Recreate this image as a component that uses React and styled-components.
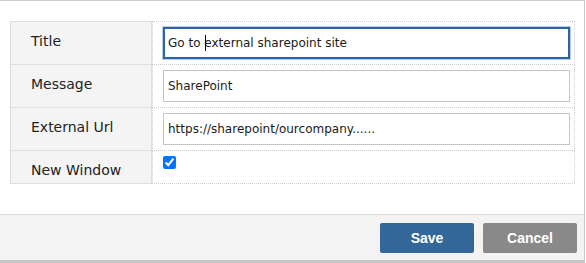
import React from 'react';
import styled, { createGlobalStyle } from 'styled-components';

const GlobalStyle = createGlobalStyle`
	* {
		box-sizing: border-box;
	}
	body {
		margin: 0;
		background: #fff;
		font-family: 'DejaVu Sans', Verdana, sans-serif;
	}
`;

const fields = [
	{ label: 'Title', value: 'Go to external sharepoint site', focused: true },
	{ label: 'Message', value: 'SharePoint' },
	{ label: 'External Url', value: 'https://sharepoint/ourcompany......' },
];

function App() {
	return (
		<>
			<GlobalStyle />
			<Dialog>
				<Body>
					<Table>
						{fields.map((f) => (
							<Row key={f.label}>
								<Label>{f.label}</Label>
								<Value>
									<InputWrap>
										<Input $focused={f.focused} value={f.value} readOnly />
										{f.focused && <Caret />}
									</InputWrap>
								</Value>
							</Row>
						))}
						<Row>
							<Label>New Window</Label>
							<Value>
								<Check type="checkbox" checked readOnly />
							</Value>
						</Row>
					</Table>
				</Body>
				<Footer>
					<Button $color="#336699">Save</Button>
					<Button $color="#898989">Cancel</Button>
				</Footer>
			</Dialog>
		</>
	);
}

export default App;

const Dialog = styled.div`
	width: 585px;
	border-top: 1px solid #cfcfcf;
	border-right: 1px solid #c8c8c8;
	display: flex;
	flex-direction: column;
`;

const Body = styled.div`
	padding: 20px 9px 30px 10px;
`;

const Table = styled.div`
	display: flex;
	flex-direction: column;
`;

const Row = styled.div`
	display: grid;
	grid-template-columns: 142px 1fr;

	&:not(:first-child) > * {
		border-top: 0;
	}
`;

const Label = styled.div`
	background: #f4f4f4;
	border: 1px solid #dedede;
	padding: 9px 20px 3px;
	font-size: 14px;
	line-height: 20px;
	color: #222;
`;

const Value = styled.div`
	border: 1px dotted #cdcdcd;
	border-left: 1px dotted #cdcdcd;
	padding: 5px 4px 5px 10px;
	display: flex;
	align-items: flex-start;
`;

const InputWrap = styled.div`
	position: relative;
	width: 100%;
`;

const Input = styled.input`
	display: block;
	width: 100%;
	height: 32px;
	margin: 0;
	padding: 0 4px;
	border: 1px solid ${(p) => (p.$focused ? '#2e63a3' : '#c4c4c4')};
	box-shadow: ${(p) => (p.$focused ? 'inset 0 0 0 1px #2e63a3, 0 0 0 1px #b8cde6' : 'none')};
	border-radius: 0;
	outline: none;
	font-family: 'DejaVu Sans', Verdana, sans-serif;
	font-size: 12px;
	color: #1a1a1a;
	background: #fff;
`;

const Caret = styled.span`
	position: absolute;
	left: 42px;
	top: 8px;
	width: 1px;
	height: 16px;
	background: #000;
`;

const Check = styled.input`
	margin: 0;
	width: 13px;
	height: 13px;
`;

const Footer = styled.div`
	display: flex;
	justify-content: flex-end;
	gap: 9px;
	padding: 8px 7px 7px;
	background: #f3f3f3;
	border-top: 1px solid #dddddd;
	border-bottom: 3px solid #c6c6c6;
`;

const Button = styled.button`
	width: 94px;
	height: 30px;
	border: 0;
	border-radius: 2px;
	background: ${(p) => p.$color};
	color: #fff;
	font-family: 'Liberation Sans', Arial, sans-serif;
	font-weight: bold;
	font-size: 14px;
	cursor: pointer;
`;
